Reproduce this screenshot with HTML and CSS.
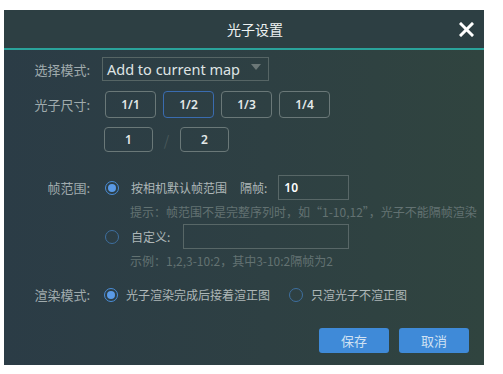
FILE: index.html
```html
<!DOCTYPE html>
<html lang="zh-CN">
<head>
    <meta charset="UTF-8">
    <title>光子设置</title>
    <link rel="stylesheet" href="styles.css">
</head>
<body>
    <div class="dialog">
        <div class="header">
            <span></span>
            <h1>光子设置</h1>
            <button class="close-btn">
                <svg width="15" height="15" viewBox="0 0 15 15">
                    <path d="M2 2 L13 13 M13 2 L2 13" stroke="#fff" stroke-width="3" stroke-linecap="square"/>
                </svg>
            </button>
        </div>

        <div class="content">
            <div class="row row-mode">
                <label class="label">选择模式:</label>
                <div class="select">
                    <span>Add to current map</span>
                    <i class="arrow"></i>
                </div>
            </div>

            <div class="row row-size">
                <label class="label">光子尺寸:</label>
                <div class="size-btns">
                    <button class="size-btn">1/1</button>
                    <button class="size-btn active">1/2</button>
                    <button class="size-btn">1/3</button>
                    <button class="size-btn">1/4</button>
                </div>
            </div>

            <div class="row row-ratio">
                <span class="label"></span>
                <div class="ratio">
                    <button class="size-btn">1</button>
                    <span class="slash">/</span>
                    <button class="size-btn">2</button>
                </div>
            </div>

            <div class="row row-frame">
                <label class="label">帧范围:</label>
                <div class="option">
                    <span class="radio checked"></span>
                    <span class="opt-text">按相机默认帧范围</span>
                    <span class="opt-text sub">隔帧:</span>
                    <input class="field field-step" type="text" value="10">
                </div>
            </div>
            <div class="row hint-row">
                <span class="label"></span>
                <p class="hint">提示：帧范围不是完整序列时，如“1-10,12”，光子不能隔帧渲染</p>
            </div>

            <div class="row row-custom">
                <span class="label"></span>
                <div class="option">
                    <span class="radio"></span>
                    <span class="opt-text">自定义:</span>
                    <input class="field field-custom" type="text">
                </div>
            </div>
            <div class="row hint-row">
                <span class="label"></span>
                <p class="hint">示例：1,2,3-10:2，其中3-10:2隔帧为2</p>
            </div>

            <div class="row row-render">
                <label class="label">渲染模式:</label>
                <div class="option">
                    <span class="radio checked"></span>
                    <span class="opt-text">光子渲染完成后接着渲正图</span>
                    <span class="radio radio-second"></span>
                    <span class="opt-text">只渲光子不渲正图</span>
                </div>
            </div>
        </div>

        <div class="footer">
            <button class="btn">保存</button>
            <button class="btn">取消</button>
        </div>
    </div>
</body>
</html>
```

FILE: styles.css
```css
* { box-sizing: border-box; margin: 0; padding: 0; }
body {
    background: #fff;
    font-family: "Noto Sans CJK SC", "Noto Sans", sans-serif;
}
.dialog {
    margin: 10px 0 0 4px;
    width: 480px;
    height: 355px;
    background: linear-gradient(90deg, #2b3c46 0%, #2e4043 55%, #30443f 100%);
    display: flex;
    flex-direction: column;
}
.header {
    height: 40px;
    display: grid;
    grid-template-columns: 1fr auto 1fr;
    align-items: center;
    border-bottom: 2px solid #2aa39b;
    background: #2d3f43;
}
.header h1 {
    font-size: 14px;
    font-weight: normal;
    color: #eef2f2;
    padding-left: 22px;
}
.close-btn {
    justify-self: end;
    margin-right: 10px;
    background: none;
    border: none;
    display: flex;
}
.content {
    padding-top: 7px;
    flex: 1;
}
.row {
    display: flex;
    align-items: center;
}
.label {
    width: 86px;
    flex-shrink: 0;
    text-align: right;
    font-size: 13px;
    color: #a0abad;
    margin-right: 12px;
}
.select {
    width: 167px;
    height: 24px;
    border: 1px solid #566565;
    display: flex;
    align-items: center;
    justify-content: space-between;
    padding: 0 7px 0 4px;
}
.select span {
    font-family: "Noto Sans", sans-serif;
    font-size: 14.5px;
    color: #dfe4e4;
}
.arrow {
    width: 0;
    height: 0;
    border-left: 5px solid transparent;
    border-right: 5px solid transparent;
    border-top: 6px solid #6c7878;
    margin-bottom: 4px;
}
.row-size { margin-top: 10px; }
.size-btns { display: flex; gap: 7px; padding-left: 3px; }
.size-btn {
    width: 51px;
    height: 27px;
    border: 1px solid #6a7878;
    border-radius: 4px;
    background: transparent;
    color: #e4e9e9;
    font-family: "Noto Sans", sans-serif;
    font-size: 12px;
    font-weight: 600;
}
.size-btn.active { border-color: #3a6cb0; }
.row-ratio { margin-top: 9px; }
.ratio { display: flex; align-items: center; padding-left: 2px; }
.ratio .size-btn { width: 49px; height: 25px; }
.slash {
    color: #48585a;
    font-size: 14px;
    width: 27px;
    text-align: center;
}
.row-frame { margin-top: 23px; }
.option { display: flex; align-items: center; }
.radio {
    width: 14px;
    height: 14px;
    border: 1px solid #3e6f9f;
    border-radius: 50%;
    margin: 0 12px 0 3px;
    flex-shrink: 0;
    display: flex;
    align-items: center;
    justify-content: center;
}
.radio.checked { border-color: #4a8dd8; }
.radio.checked::after {
    content: "";
    width: 8px;
    height: 8px;
    border-radius: 50%;
    background: #5a9ae6;
}
.opt-text {
    font-size: 12px;
    color: #aeb7b8;
}
.opt-text.sub { margin: 0 11px 0 13px; }
.field {
    height: 25px;
    background: transparent;
    border: 1px solid #586767;
    color: #fff;
    font-family: "Noto Sans", sans-serif;
    font-weight: 600;
    font-size: 12px;
    padding: 0 5px;
    outline: none;
}
.field-step { width: 71px; }
.field-custom { width: 166px; margin-left: 13px; }
.hint-row { margin-top: 3px; }
.hint {
    font-size: 12px;
    color: #637272;
    padding-left: 28px;
    white-space: nowrap;
}
.row-custom { margin-top: 4px; }
.row-render { margin-top: 16px; }
.row-render .radio { margin-right: 8px; margin-left: 2px; }
.row-render .radio-second { margin-left: 19px; }
.footer {
    display: flex;
    justify-content: flex-end;
    gap: 10px;
    padding: 0 15px 12px 0;
}
.btn {
    width: 70px;
    height: 25px;
    border: none;
    border-radius: 3px;
    background: #3f8ad8;
    color: #cfe1f3;
    font-family: "Noto Sans CJK SC", sans-serif;
    font-size: 13px;
}
```
